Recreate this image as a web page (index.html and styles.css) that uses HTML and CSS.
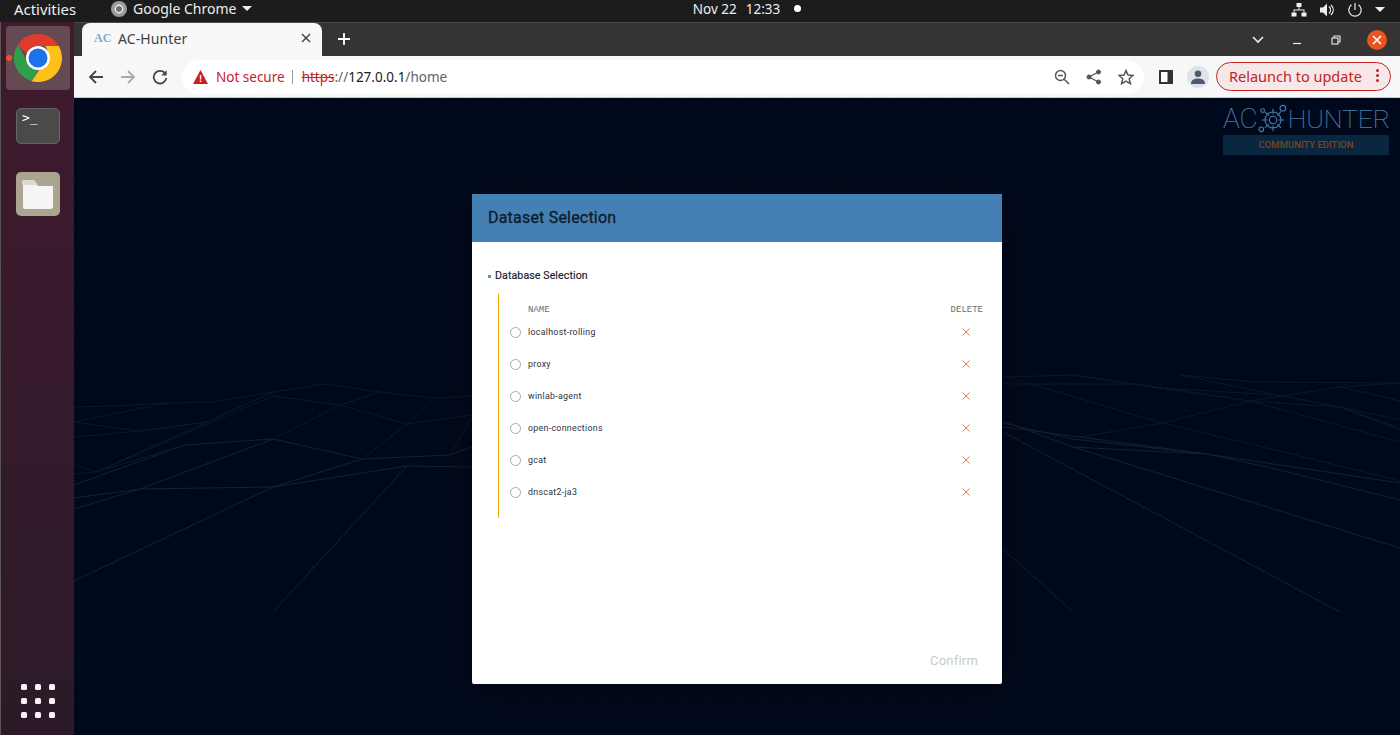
FILE: index.html
```html
<!DOCTYPE html>
<html lang="en">
<head>
<meta charset="utf-8">
<title>AC-Hunter</title>
<link rel="stylesheet" href="styles.css">
</head>
<body>
<header class="topbar">
  <div class="tb-left">
    <span class="activities">Activities</span>
    <span class="appmenu">
      <svg class="tb-chrome" viewBox="0 0 16 16"><circle cx="8" cy="8" r="8" fill="#9a9a9a"/><circle cx="8" cy="8" r="4.4" fill="#eee"/><circle cx="8" cy="8" r="3" fill="#6f6f6f"/></svg>
      <span>Google Chrome</span>
      <i class="caret"></i>
    </span>
  </div>
  <div class="tb-clock"><span>Nov 22</span><span>12:33</span><i class="clockdot"></i></div>
  <div class="tb-right">
    <svg width="16" height="16" viewBox="0 0 16 16" fill="#eee"><rect x="5.5" y="1" width="5" height="4"/><rect x="0.5" y="10.5" width="5" height="4"/><rect x="10.5" y="10.5" width="5" height="4"/><path d="M7.5 5h1v2.500H13.500V10.500h-1V8.500h-9v2h-1V7.500H7.500z"/></svg>
    <svg width="16" height="16" viewBox="0 0 16 16" fill="#eee"><path d="M1 5.500h3L8 1.500v13l-4-4H1z"/><path d="M10 4.500c2 2 2 5 0 7M12 3c3 3 3 7 0 10" fill="none" stroke="#eee" stroke-width="1.200"/></svg>
    <svg width="16" height="16" viewBox="0 0 16 16" fill="none" stroke="#eee" stroke-width="1.200"><path d="M8 1v7"/><path d="M4.500 2.800a6.200 6.200 0 1 0 7 0"/></svg>
    <i class="caret"></i>
  </div>
</header>

<div class="desktop">
  <nav class="dock">
    <div class="dock-apps">
      <div class="dock-active">
        <i class="running"></i>
        <svg class="chrome-logo" viewBox="0 0 48 48">
          <path d="M24 0a24 24 0 0 1 20.800 12H24a12 12 0 0 0-11.300 7.900L3.900 10.800A24 24 0 0 1 24 0z" fill="#e23b2e"/>
          <path d="M3.900 10.800l10.400 18.900A12 12 0 0 0 24 36l-6.300 11.200A24 24 0 0 1 3.900 10.800z" fill="#2f9e4d"/>
          <path d="M44.800 12A24 24 0 0 1 17.700 47.200L29 30a12 12 0 0 0 2-18z" fill="#fcc21b"/>
          <circle cx="24" cy="24" r="12" fill="#fff"/>
          <circle cx="24" cy="24" r="9.500" fill="#1a73e8"/>
        </svg>
      </div>
      <div class="terminal"><span>&gt;_</span></div>
      <div class="files"><svg width="34" height="30" viewBox="0 0 34 30"><path d="M2 3h11l4 4h15v21a2 2 0 0 1-2 2H4a2 2 0 0 1-2-2z" fill="#f6f5f3"/><path d="M1 3a2 2 0 0 1 2-2h10l4 5H1z" fill="#dcd9d0"/></svg></div>
    </div>
    <div class="appgrid"><i></i><i></i><i></i><i></i><i></i><i></i><i></i><i></i><i></i></div>
  </nav>

  <div class="browser">
    <div class="tabstrip">
      <div class="tab">
        <span class="favicon">AC</span>
        <span class="tab-title">AC-Hunter</span>
        <svg width="10" height="10" viewBox="0 0 10 10" stroke="#444" stroke-width="1.500"><path d="M1 1l8 8M9 1l-8 8"/></svg>
      </div>
      <svg class="newtab" width="12" height="12" viewBox="0 0 12 12" stroke="#fff" stroke-width="1.800"><path d="M6 0v12M0 6h12"/></svg>
      <div class="wincontrols">
        <svg class="wc-menu" width="14" height="8" viewBox="0 0 14 8" fill="none" stroke="#eee" stroke-width="1.600"><path d="M2 1l5 5 5-5"/></svg>
        <svg class="wc-min" width="10" height="10" viewBox="0 0 10 10" stroke="#eee" stroke-width="1.200"><path d="M1 8.500h8"/></svg>
        <svg class="wc-max" width="10" height="10" viewBox="0 0 10 10" fill="none" stroke="#eee" stroke-width="1.100"><rect x="1" y="3" width="6" height="6"/><path d="M3 3V1h6v6H7"/></svg>
        <span class="winclose"><svg width="10" height="10" viewBox="0 0 10 10" stroke="#fff" stroke-width="1.600"><path d="M1 1l8 8M9 1l-8 8"/></svg></span>
      </div>
    </div>

    <div class="toolbar">
      <svg width="16" height="16" viewBox="0 0 16 16" fill="none" stroke="#444" stroke-width="1.800"><path d="M15 8H2M8 2L2 8l6 6"/></svg>
      <svg width="16" height="16" viewBox="0 0 16 16" fill="none" stroke="#aaa" stroke-width="1.800"><path d="M1 8h13M8 2l6 6-6 6"/></svg>
      <svg width="16" height="16" viewBox="0 0 16 16" fill="none" stroke="#444" stroke-width="1.800"><path d="M13.500 5A6.300 6.300 0 1 0 14.300 9"/><path d="M14.600 1.200v5.300H9.300z" fill="#444" stroke="none"/></svg>
      <div class="omnibox">
        <svg class="warn" width="15" height="14" viewBox="0 0 15 14"><path d="M7.500 0L15 14H0z" fill="#c5221f"/><rect x="6.800" y="5" width="1.500" height="4.500" fill="#fff"/><rect x="6.800" y="10.500" width="1.500" height="1.500" fill="#fff"/></svg>
        <span class="notsecure">Not secure</span>
        <i class="omni-sep"></i>
        <span class="url"><s>https</s><span class="url-dim">://</span><span class="url-host">127.0.0.1</span><span class="url-dim">/home</span></span>
        <span class="omni-icons">
          <svg width="16" height="16" viewBox="0 0 16 16" fill="none" stroke="#555" stroke-width="1.500"><circle cx="6.500" cy="6.500" r="5"/><path d="M10.200 10.200L15 15M4 6.500h5"/></svg>
          <svg width="16" height="16" viewBox="0 0 16 16" fill="#555" stroke="#555"><circle cx="12.500" cy="3" r="2"/><circle cx="12.500" cy="13" r="2"/><circle cx="3" cy="8" r="2"/><path d="M12.500 3L3 8l9.500 5" fill="none" stroke-width="1.300"/></svg>
          <svg width="16" height="16" viewBox="0 0 16 16" fill="none" stroke="#555" stroke-width="1.500"><path d="M8 1.500l2 4.600 5 .4-3.800 3.300 1.200 4.900L8 12.100l-4.400 2.600 1.200-4.900L1 6.500l5-.4z"/></svg>
        </span>
      </div>
      <svg class="sidepanel" width="14" height="14" viewBox="0 0 14 14"><path d="M0 0h14v14H0z" fill="#333"/><rect x="2" y="2" width="6.500" height="10" fill="#fff"/></svg>
      <span class="avatar"><svg width="14" height="14" viewBox="0 0 14 14" fill="#4c5a6d"><circle cx="7" cy="3.800" r="3.300"/><path d="M0 14c0-4 3-5.500 7-5.500s7 1.500 7 5.500z"/></svg></span>
      <span class="relaunch"><span>Relaunch to update</span><span class="kebab"><i></i><i></i><i></i></span></span>
    </div>

    <main class="page">
      <svg class="backdrop" viewBox="74 98 1326 637" preserveAspectRatio="none" fill="none">
        <defs>
          <pattern id="dots" x="100" y="124" width="26.500" height="26" patternUnits="userSpaceOnUse"><rect width="1" height="1" fill="#141c2c"/></pattern>
        </defs>
        <rect x="74" y="98" width="1326" height="637" fill="url(#dots)"/>
        <g stroke="#172031" stroke-width="1">
          <path d="M74 581L273 487 407 466 472 467"/>
          <path d="M273 612L407 466"/>
          <path d="M74 498L140 489 273 487 362 459 450 455 472 447"/>
          <path d="M74 509L140 489 273 439 362 459"/>
          <path d="M74 485L185 445 273 439"/>
          <path d="M1003 421L1073 447 1207 454 1267 463 1400 483"/>
          <path d="M1073 447L1400 548"/>
          <path d="M1003 432L1340 612"/>
          <path d="M1003 549L1073 612"/>
          <path d="M1003 423L1073 439 1207 454 1267 467 1400 500"/>
          <path d="M1003 427L1080 437 1207 454"/>
        </g>
        <g stroke="#0f1828" stroke-width="1">
          <path d="M362 459L407 424 433 398 472 396"/>
          <path d="M74 474L96 472 273 396 340 405 407 424 472 415"/>
          <path d="M74 465L96 472 185 445"/>
          <path d="M96 472L273 392 325 384 380 392 433 398"/>
          <path d="M273 439L340 405 380 392"/>
          <path d="M74 437L140 431 207 422 273 392"/>
          <path d="M74 422L140 431 207 422"/>
          <path d="M74 422L167 403 213 402 273 392"/>
          <path d="M74 407L113 406 167 403"/>
          <path d="M450 455L472 417"/>
          <path d="M1080 437L1162 423 1250 401 1340 387 1400 383"/>
          <path d="M1007 377L1162 423 1267 448 1400 481"/>
          <path d="M1003 377L1073 375 1160 388 1250 401 1400 442"/>
          <path d="M1073 375L1160 388 1277 395 1340 407 1400 428"/>
          <path d="M1180 375L1277 395 1340 407 1400 420"/>
          <path d="M1003 384L1133 384 1250 401 1340 407 1400 430"/>
          <path d="M1180 375L1257 382 1400 383"/>
          <path d="M1340 387L1400 401"/>
        </g>
      </svg>

      <div class="brand">
        <div class="brand-name">
          <span>AC</span>
          <svg class="brand-hub" width="30" height="30" viewBox="0 0 32 32" fill="none" stroke="#4a7aa5" stroke-width="1.200"><circle cx="16" cy="17" r="8.500"/><circle cx="16" cy="17" r="4"/><path d="M16 5v6M16 23v6M4 17h6M22 17h6M7.500 8.500l4 4M24.500 8l-4 4.500M7.500 25.500l4-4M24.500 25.500l-4-4"/><circle cx="26.500" cy="4.500" r="3"/><circle cx="5" cy="7" r="2"/><circle cx="3.500" cy="27" r="2.500"/></svg>
          <span class="brand-hunter">HUNTER</span>
        </div>
        <div class="brand-edition">COMMUNITY EDITION</div>
      </div>

      <section class="modal">
        <h1 class="modal-head">Dataset Selection</h1>
        <div class="modal-body">
          <h2 class="section-title"><i></i>Database Selection</h2>
          <div class="dblist">
            <div class="dbhead"><span>NAME</span><span>DELETE</span></div>
            <div class="dbrow"><i class="radio"></i><span>localhost-rolling</span><svg class="del" viewBox="0 0 9 9"><path d="M.5.500l8 8M8.500.500l-8 8"/></svg></div>
            <div class="dbrow"><i class="radio"></i><span>proxy</span><svg class="del" viewBox="0 0 9 9"><path d="M.5.500l8 8M8.500.500l-8 8"/></svg></div>
            <div class="dbrow"><i class="radio"></i><span>winlab-agent</span><svg class="del" viewBox="0 0 9 9"><path d="M.5.500l8 8M8.500.500l-8 8"/></svg></div>
            <div class="dbrow"><i class="radio"></i><span>open-connections</span><svg class="del" viewBox="0 0 9 9"><path d="M.5.500l8 8M8.500.500l-8 8"/></svg></div>
            <div class="dbrow"><i class="radio"></i><span>gcat</span><svg class="del" viewBox="0 0 9 9"><path d="M.5.500l8 8M8.500.500l-8 8"/></svg></div>
            <div class="dbrow"><i class="radio"></i><span>dnscat2-ja3</span><svg class="del" viewBox="0 0 9 9"><path d="M.5.500l8 8M8.500.500l-8 8"/></svg></div>
          </div>
          <div class="modal-foot"><span class="confirm">Confirm</span></div>
        </div>
      </section>
    </main>
  </div>
</div>
</body>
</html>
```

FILE: styles.css
```css
* { box-sizing: border-box; }
html, body { margin: 0; height: 100%; overflow: hidden; }
body { display: flex; flex-direction: column; font-family: "Noto Sans", "Open Sans", sans-serif; background: #00091c; }
i { display: block; font-style: normal; }

.topbar { height: 22px; flex: none; background: #1c1c1c; color: #eee; font-size: 14px; display: grid; grid-template-columns: 1fr auto 1fr; align-items: center; padding: 0 14px; line-height: 16px; }
.tb-left { display: flex; align-items: center; gap: 35px; margin-top: -5px; }
.activities { font-size: 14.900px; }
.appmenu { display: flex; align-items: center; gap: 6px; }
.tb-chrome { width: 16px; height: 16px; }
.caret { width: 0; height: 0; border-left: 5px solid transparent; border-right: 5px solid transparent; border-top: 5px solid #eee; }
.tb-clock { display: flex; align-items: center; gap: 9px; padding-left: 94px; font-size: 13.500px; margin-top: -5px; }
.clockdot { width: 7px; height: 7px; border-radius: 50%; background: #fff; margin-left: 5px; }
.tb-right { display: flex; align-items: center; justify-content: flex-end; gap: 12px; padding-right: 1px; margin-top: -3px; }

.desktop { flex: 1; display: flex; min-height: 0; }
.dock { width: 74px; flex: none; background: linear-gradient(#401a2e, #2c1a29); border-left: 1px solid #5a5552; display: flex; flex-direction: column; justify-content: space-between; padding: 4px 0 17px 5px; }
.dock-apps { display: flex; flex-direction: column; align-items: flex-start; }
.dock-active { width: 64px; height: 64px; border-radius: 4px; background: #654a53; display: flex; align-items: center; justify-content: center; position: relative; }
.running { position: absolute; left: 0; top: 29px; width: 6px; height: 6px; border-radius: 50%; background: #e95420; }
.chrome-logo { width: 48px; height: 48px; }
.terminal { width: 44px; height: 36px; margin: 18px 0 0 10px; border-radius: 5px; background: #4a4a4a; border: 1px solid #666; color: #fff; font: 13px/14px "DejaVu Sans Mono", monospace; padding: 2px 5px; }
.files { width: 44px; height: 44px; margin: 28px 0 0 10px; border-radius: 5px; background: #aba490; display: flex; align-items: center; justify-content: center; }
.appgrid { display: grid; grid-template-columns: repeat(3, 6px); gap: 8px; margin-left: 15px; }
.appgrid i { width: 6px; height: 6px; background: #f4f4f4; border-radius: 1.500px; }

.browser { flex: 1; min-width: 0; display: flex; flex-direction: column; }
.tabstrip { height: 34px; flex: none; background: #353333; border-top: 1px solid #4a4a4a; display: flex; align-items: flex-end; padding-left: 8px; }
.tab { width: 240px; height: 33px; background: #f8f8f8; border-radius: 8px 8px 0 0; display: flex; align-items: center; padding: 0 11px 3px 12px; color: #3c4043; font-size: 14px; }
.favicon { width: 24px; font: 700 12px/14px "Liberation Serif", serif; color: #7fa9c4; flex: none; }
.tab-title { flex: 1; letter-spacing: .1px; }
.newtab { margin: 0 0 11px 16px; }
.wincontrols { margin-left: auto; height: 33px; display: flex; align-items: center; padding-right: 13px; }
.wc-menu { margin-right: 27px; }
.wc-min { margin-right: 29px; }
.wc-max { margin-right: 26px; }
.winclose { width: 20px; height: 20px; border-radius: 50%; background: #e95420; display: flex; align-items: center; justify-content: center; }

.toolbar { height: 42px; flex: none; background: #f7f7f7; border-bottom: 1px solid #c8c8c8; display: flex; align-items: center; padding: 0 9px 0 14px; }
.toolbar > svg:nth-child(2), .toolbar > svg:nth-child(3) { margin-left: 16px; }
.omnibox { margin-left: 14px; width: 962px; height: 34px; background: #fff; border-radius: 17px; display: flex; align-items: center; padding: 0 10px 0 11px; font-size: 13.500px; }
.notsecure { color: #c5221f; margin-left: 8px; }
.omni-sep { width: 1px; height: 14px; background: #999; margin: 0 9px 0 7px; }
.url { color: #202124; }
.url s { color: #c5221f; }
.url-dim { color: #5f6368; }
.omni-icons { margin-left: auto; display: flex; gap: 16px; }
.sidepanel { margin-left: 15px; }
.avatar { width: 22px; height: 22px; border-radius: 50%; background: #dfe3e8; margin-left: 14px; display: flex; align-items: center; justify-content: center; }
.relaunch { margin-left: 7px; width: 175px; height: 29px; border: 1px solid #c5221f; border-radius: 15px; background: #f6e8e8; color: #c5221f; font-size: 14.500px; line-height: 20px; display: flex; align-items: center; justify-content: space-between; padding: 0 11px 2px 12px; }
.kebab { display: grid; gap: 2px; }
.kebab i { width: 3px; height: 3px; background: #c5221f; border-radius: 50%; }

.page { flex: 1; min-height: 0; position: relative; background: #00091c; display: flex; justify-content: center; align-items: flex-start; padding-top: 96px; }
.backdrop { position: absolute; inset: 0; width: 100%; height: 100%; }

.brand { position: absolute; top: 4px; right: 11px; width: 166px; }
.brand-name { display: flex; align-items: center; justify-content: space-between; height: 33px; color: #4a7aa5; font: 100 28px/32px "Roboto", sans-serif; -webkit-text-stroke: .2px #4a7aa5; }
.brand-hub { flex: none; }
.brand-hunter { font-size: 26.500px; letter-spacing: -.1px; }
.brand-edition { height: 20px; background: #0a2740; color: #7a4422; font: 500 9.500px/20px "Roboto", sans-serif; text-align: center; }

.modal { position: relative; width: 530px; height: 490px; background: #fff; border-radius: 2px; display: flex; flex-direction: column; box-shadow: 0 6px 40px rgba(0, 0, 0, .3); color: #10202f; font-family: "Roboto", sans-serif; }
.modal-head { margin: 0; height: 48px; flex: none; background: #4480b3; color: #0c1b2c; font-size: 16px; font-weight: 400; line-height: 48px; padding-left: 16px; border-radius: 2px 2px 0 0; letter-spacing: .2px; -webkit-text-stroke: .3px #0c1b2c; }
.modal-body { flex: 1; display: flex; flex-direction: column; padding: 26px 19px 16px 16px; }
.section-title { margin: 0; display: flex; align-items: center; font-size: 10.600px; font-weight: 400; line-height: 16px; letter-spacing: .1px; -webkit-text-stroke: .15px #10202f; }
.section-title i { width: 3px; height: 3px; background: #4caf50; margin-right: 4px; }
.dblist { margin: 10px 0 0 10px; border-left: 1px solid #f5a800; height: 224px; padding-left: 11px; }
.dbhead { display: flex; justify-content: space-between; height: 22px; padding: 9px 0 0 18px; color: #6a6a70; font: 9px/14px "Liberation Mono", monospace; }
.dbrow { display: grid; grid-template-columns: 18px 1fr 8px; align-items: center; height: 32px; font-size: 8.800px; padding-right: 13px; letter-spacing: .3px; color: #2a3340; }
.radio { width: 11px; height: 11px; border: 1px solid #a8a8a8; border-radius: 50%; }
.del { width: 8px; height: 8px; fill: none; margin-top: -1px; }
.del path { stroke: #d9603f; stroke-width: .9; }
.modal-foot { margin-top: auto; display: flex; justify-content: flex-end; padding-right: 5px; }
.confirm { color: #c8cccc; font-size: 13px; font-weight: 400; letter-spacing: .2px; }
```
